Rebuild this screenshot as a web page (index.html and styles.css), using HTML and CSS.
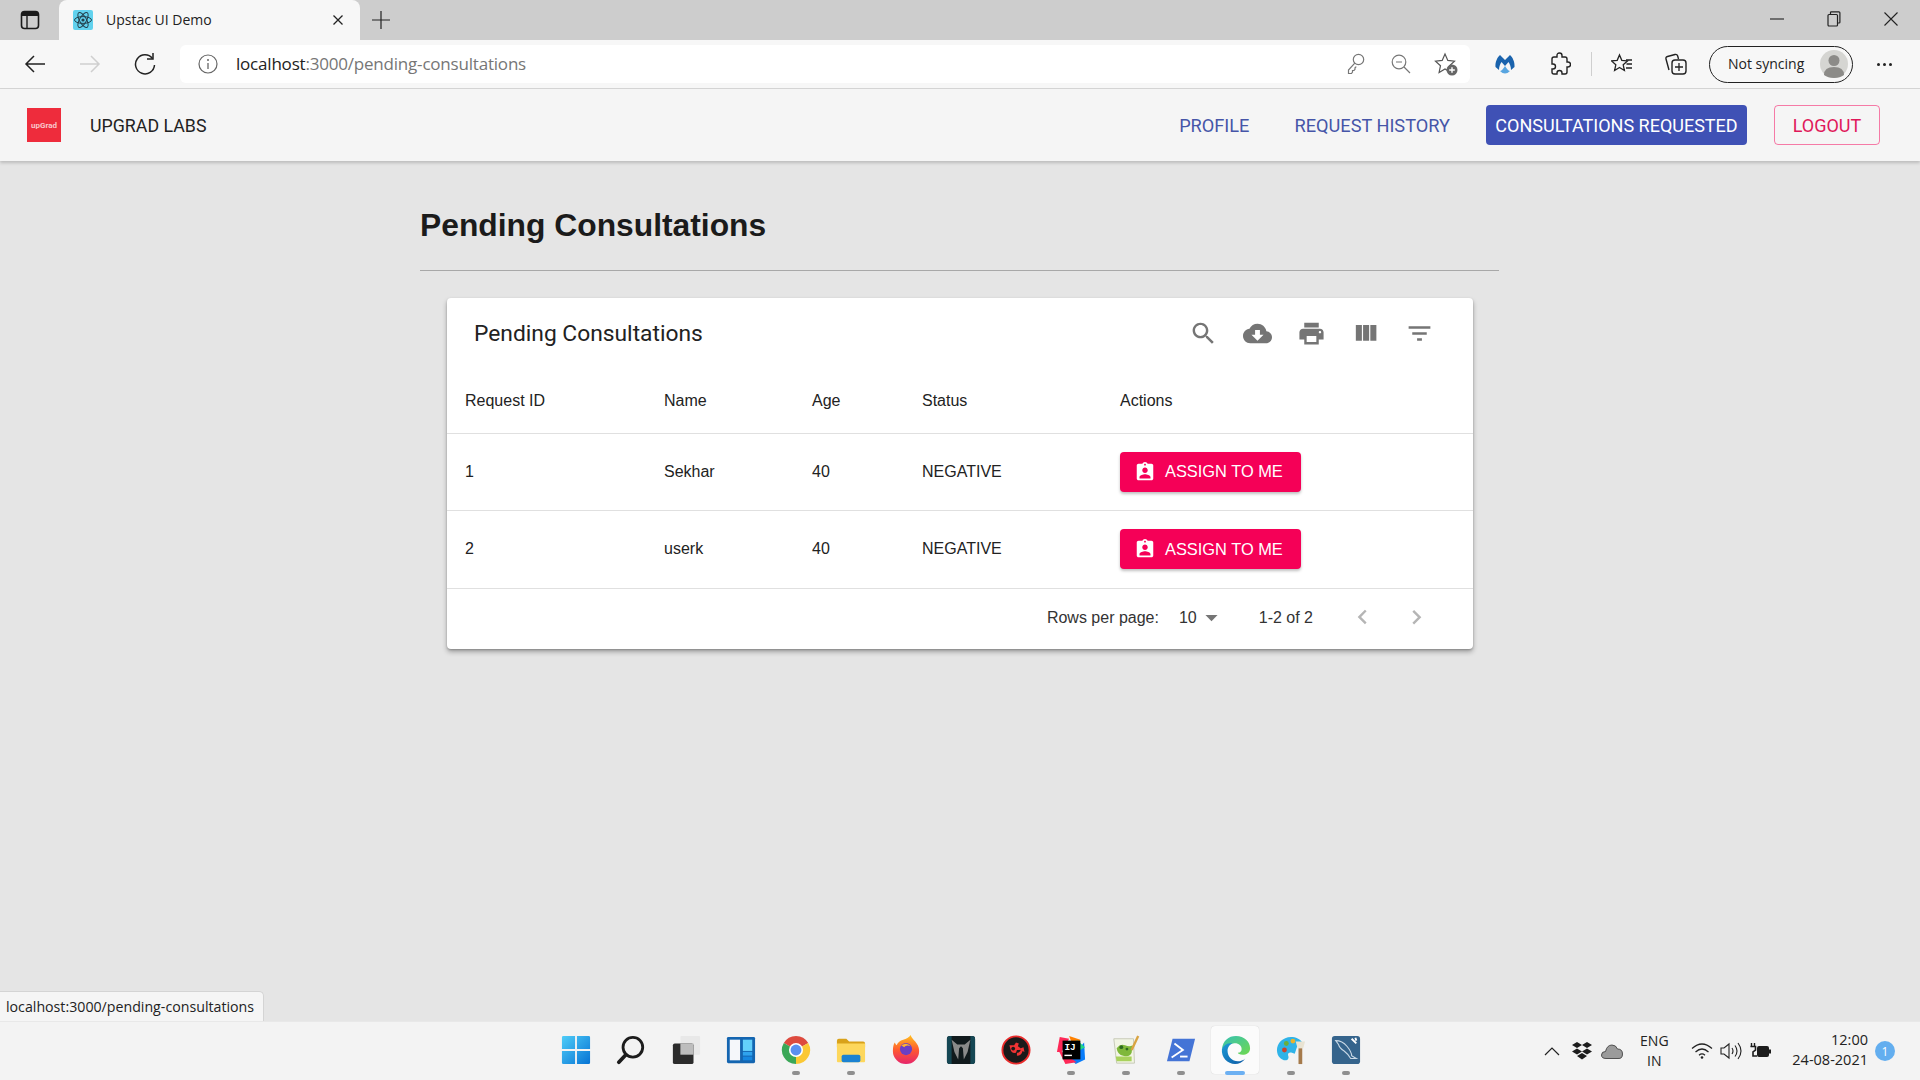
FILE: index.html
```html
<!DOCTYPE html>
<html lang="en">
<head>
    <meta charset="UTF-8">
    <title>Upstac UI Demo</title>
    <link rel="stylesheet" href="styles.css">
</head>
<body>
    <!-- browser tabs -->
    <div class="tabstrip">
        <div class="tab-side">
            <svg width="20" height="20" viewBox="0 0 20 20"><rect x="1.5" y="1.5" width="17" height="17" rx="3" fill="none" stroke="#1a1a1a" stroke-width="1.6"/><path d="M2 2h16v4H2z" fill="#1a1a1a"/><path d="M7 6v12" stroke="#1a1a1a" stroke-width="1.4"/></svg>
        </div>
        <div class="tab">
            <svg class="tab-icon" width="20" height="20" viewBox="0 0 20 20"><rect width="20" height="20" rx="2" fill="#61d2ee"/><g fill="none" stroke="#23404c" stroke-width="1"><ellipse cx="10" cy="10" rx="8.5" ry="3.4"/><ellipse cx="10" cy="10" rx="8.5" ry="3.4" transform="rotate(60 10 10)"/><ellipse cx="10" cy="10" rx="8.5" ry="3.4" transform="rotate(120 10 10)"/></g><circle cx="10" cy="10" r="1.6" fill="#23404c"/></svg>
            <span class="tab-title">Upstac UI Demo</span>
            <svg width="12" height="12" viewBox="0 0 12 12"><path d="M1.5 1.5l9 9M10.5 1.5l-9 9" stroke="#222" stroke-width="1.3"/></svg>
        </div>
        <div class="tab-new">
            <svg width="18" height="18" viewBox="0 0 18 18"><path d="M9 0v18M0 9h18" stroke="#222" stroke-width="1.2"/></svg>
        </div>
        <div class="win-controls">
            <span class="win-btn"><svg width="14" height="14" viewBox="0 0 14 14"><path d="M0 7h14" stroke="#222" stroke-width="1.1"/></svg></span>
            <span class="win-btn"><svg width="14" height="16" viewBox="0 0 14 16"><rect x="1" y="3.5" width="9.5" height="11.5" rx="1" fill="none" stroke="#222" stroke-width="1.2"/><path d="M3.5 3.5V1.6q0-.8.8-.8h7.600q1 0 1 1v9.400q0 .8-.8.8h-1.600" fill="none" stroke="#222" stroke-width="1.2"/></svg></span>
            <span class="win-btn"><svg width="14" height="14" viewBox="0 0 14 14"><path d="M.5.5l13 13M13.500.5l-13 13" stroke="#222" stroke-width="1.1"/></svg></span>
        </div>
    </div>

    <!-- address bar -->
    <div class="toolbar">
        <span class="tool-btn"><svg width="22" height="20" viewBox="0 0 22 20"><path d="M21 10H2M10 2l-8 8 8 8" fill="none" stroke="#222" stroke-width="1.5"/></svg></span>
        <span class="tool-btn"><svg width="22" height="20" viewBox="0 0 22 20"><path d="M1 10h19M12 2l8 8-8 8" fill="none" stroke="#cfcfcf" stroke-width="1.5"/></svg></span>
        <span class="tool-btn"><svg width="22" height="24" viewBox="0 0 22 24"><path d="M18.500 6.500A9.500 9.500 0 1 0 20.500 13" fill="none" stroke="#222" stroke-width="1.5"/><path d="M19 1v6h-6" fill="none" stroke="#222" stroke-width="1.5"/></svg></span>
        <div class="address">
            <svg class="info-icon" width="20" height="20" viewBox="0 0 20 20"><circle cx="10" cy="10" r="9" fill="none" stroke="#666" stroke-width="1.2"/><path d="M10 9v6" stroke="#666" stroke-width="1.3"/><circle cx="10" cy="6" r="1" fill="#666"/></svg>
            <span class="url"><span class="url-host">localhost</span>:3000/pending-consultations</span>
            <span class="addr-btn"><svg width="18" height="22" viewBox="0 0 18 22"><circle cx="11.500" cy="6.500" r="5.200" fill="none" stroke="#777" stroke-width="1.2"/><path d="M7.800 10.200L1.500 17v3.500h3l1-1.500v-1.500h1.500l1-1.200v-1.500l1.300-1.200" fill="none" stroke="#777" stroke-width="1.2"/></svg></span>
            <span class="addr-btn"><svg width="20" height="20" viewBox="0 0 20 20"><circle cx="8" cy="8" r="6.800" fill="none" stroke="#777" stroke-width="1.2"/><path d="M13 13l6 6M5 8h6" stroke="#777" stroke-width="1.2"/></svg></span>
            <span class="addr-btn"><svg width="24" height="24" viewBox="0 0 24 24"><path d="M11 2l2.800 6.400 6.700.7-5 4.600 1.400 6.800-5.900-3.500-5.900 3.500 1.400-6.800-5-4.600 6.700-.7z" fill="none" stroke="#555" stroke-width="1.2"/><circle cx="18" cy="18" r="5.500" fill="#666"/><path d="M18 15.200v5.600M15.200 18h5.600" stroke="#fff" stroke-width="1.4"/></svg></span>
        </div>
        <span class="tool-btn tool-first"><svg width="20" height="20" viewBox="0 0 20 20"><path d="M5 1L10 6l5-5c2.500 2 5 7 4.500 12l-3.500 3c0-3-1-6-2.500-8L10 12 6.500 8C5 10 4 13 4 16l-3.500-3C0 8 2.500 3 5 1z" fill="#1a63ad"/><path d="M5 17q5 5 10 0-2 0-5-5-3 5-5 5z" fill="#58a5e0"/></svg></span>
        <span class="tool-btn"><svg width="22" height="24" viewBox="0 0 22 24"><path d="M8 5V3.500Q8 1 10.500 1T13 3.500V5h3q2 0 2 2v3h1q2.500 0 2.500 2.500T19 15h-1v5q0 2-2 2h-3v-1q0-2.500-2.500-2.500T8 21v1H5q-2 0-2-2v-3h1q2.500 0 2.500-2.500T4 12H3V7q0-2 2-2z" fill="none" stroke="#222" stroke-width="1.4"/></svg></span>
        <span class="tool-sep"></span>
        <span class="tool-btn"><svg width="22" height="22" viewBox="0 0 22 22"><path d="M8.500 2l2.300 5.300 5.700.6-4.300 3.900 1.200 5.700-4.900-3-4.900 3 1.200-5.700L.5 7.900l5.700-.6z" fill="none" stroke="#222" stroke-width="1.3"/><path d="M15 7h6M15.500 11h5.500M15 15h6" stroke="#222" stroke-width="1.3"/></svg></span>
        <span class="tool-btn tool-coll"><svg width="24" height="24" viewBox="0 0 24 24"><rect x="8" y="8" width="14" height="14" rx="3" fill="none" stroke="#222" stroke-width="1.4"/><path d="M15 11v8M11 15h8" stroke="#222" stroke-width="1.3"/><path d="M5 18L2 7q-.5-2 1.500-2.500L11 2.500q2-.5 2.700 1.500l.8 3" fill="none" stroke="#222" stroke-width="1.4"/></svg></span>
        <div class="sync-pill">
            <span>Not syncing</span>
            <svg width="28" height="28" viewBox="0 0 28 28"><circle cx="14" cy="14" r="14" fill="#d5d5d2"/><circle cx="14" cy="10.500" r="5.500" fill="#8c8b88"/><path d="M4 25q0-8 10-8t10 8q-4 3-10 3t-10-3z" fill="#8c8b88"/></svg>
        </div>
        <span class="tool-more"><i></i><i></i><i></i></span>
    </div>

    <!-- app -->
    <header class="appbar">
        <div class="brand-logo">upGrad</div>
        <div class="brand-name">UPGRAD LABS</div>
        <nav class="nav">
            <a class="nav-link nav-profile">PROFILE</a>
            <a class="nav-link nav-history">REQUEST HISTORY</a>
            <a class="nav-active">CONSULTATIONS REQUESTED</a>
            <a class="nav-logout">LOGOUT</a>
        </nav>
    </header>

    <main class="page">
        <h1 class="page-title">Pending Consultations</h1>
        <hr class="page-rule">
        <section class="card">
            <div class="card-head">
                <h2 class="card-title">Pending Consultations</h2>
                <div class="card-tools">
                    <span class="card-tool"><svg viewBox="0 0 24 24"><path d="M15.5 14h-.79l-.28-.27C15.41 12.59 16 11.11 16 9.5 16 5.91 13.09 3 9.5 3S3 5.91 3 9.5 5.91 16 9.5 16c1.61 0 3.09-.59 4.23-1.57l.27.28v.79l5 4.99L20.49 19l-4.99-5zm-6 0C7.01 14 5 11.99 5 9.5S7.01 5 9.5 5 14 7.01 14 9.5 11.99 14 9.5 14z"/></svg></span>
                    <span class="card-tool"><svg viewBox="0 0 24 24"><path d="M19.35 10.04C18.67 6.59 15.64 4 12 4 9.11 4 6.6 5.64 5.35 8.04 2.34 8.36 0 10.91 0 14c0 3.31 2.69 6 6 6h13c2.76 0 5-2.24 5-5 0-2.64-2.05-4.78-4.65-4.96zM17 13l-5 5-5-5h3V9h4v4h3z"/></svg></span>
                    <span class="card-tool"><svg viewBox="0 0 24 24"><path d="M19 8H5c-1.66 0-3 1.34-3 3v6h4v4h12v-4h4v-6c0-1.66-1.34-3-3-3zm-3 11H8v-5h8v5zm3-7c-.55 0-1-.45-1-1s.45-1 1-1 1 .45 1 1-.45 1-1 1zm-1-9H6v4h12V3z"/></svg></span>
                    <span class="card-tool"><svg viewBox="0 0 24 24"><path d="M10 18h5V5h-5v13zm-6 0h5V5H4v13zM16 5v13h5V5h-5z"/></svg></span>
                    <span class="card-tool"><svg viewBox="0 0 24 24"><path d="M10 18h4v-2h-4v2zM3 6v2h18V6H3zm3 7h12v-2H6v2z"/></svg></span>
                </div>
            </div>
            <table class="data-table">
                <colgroup>
                    <col class="col-id"><col class="col-name"><col class="col-age"><col class="col-status"><col>
                </colgroup>
                <thead>
                    <tr><th>Request ID</th><th>Name</th><th>Age</th><th>Status</th><th>Actions</th></tr>
                </thead>
                <tbody>
                    <tr>
                        <td>1</td><td>Sekhar</td><td>40</td><td>NEGATIVE</td>
                        <td><button class="assign-btn"><svg viewBox="0 0 24 24"><path d="M19 3h-4.18C14.4 1.84 13.3 1 12 1c-1.3 0-2.4.84-2.82 2H5c-1.1 0-2 .9-2 2v14c0 1.1.9 2 2 2h14c1.1 0 2-.9 2-2V5c0-1.1-.9-2-2-2zm-7 0c.55 0 1 .45 1 1s-.45 1-1 1-1-.45-1-1 .45-1 1-1zm0 4c1.66 0 3 1.34 3 3s-1.34 3-3 3-3-1.34-3-3 1.34-3 3-3zm6 12H6v-1.4c0-2 4-3.1 6-3.1s6 1.1 6 3.1V19z"/></svg>ASSIGN TO ME</button></td>
                    </tr>
                    <tr class="row-last">
                        <td>2</td><td>userk</td><td>40</td><td>NEGATIVE</td>
                        <td><button class="assign-btn"><svg viewBox="0 0 24 24"><path d="M19 3h-4.18C14.4 1.84 13.3 1 12 1c-1.3 0-2.4.84-2.82 2H5c-1.1 0-2 .9-2 2v14c0 1.1.9 2 2 2h14c1.1 0 2-.9 2-2V5c0-1.1-.9-2-2-2zm-7 0c.55 0 1 .45 1 1s-.45 1-1 1-1-.45-1-1 .45-1 1-1zm0 4c1.66 0 3 1.34 3 3s-1.34 3-3 3-3-1.34-3-3 1.34-3 3-3zm6 12H6v-1.4c0-2 4-3.1 6-3.1s6 1.1 6 3.1V19z"/></svg>ASSIGN TO ME</button></td>
                    </tr>
                </tbody>
            </table>
            <div class="pager">
                <span class="pager-label">Rows per page:</span>
                <span class="pager-size">10</span>
                <svg class="pager-caret" viewBox="0 0 24 24"><path d="M7 10l5 5 5-5z"/></svg>
                <span class="pager-range">1-2 of 2</span>
                <svg class="pager-arrow" viewBox="0 0 24 24"><path d="M15.41 16.09l-4.58-4.59 4.58-4.59L14 5.5l-6 6 6 6z"/></svg>
                <svg class="pager-arrow" viewBox="0 0 24 24"><path d="M8.59 16.34l4.58-4.59-4.58-4.59L10 5.75l6 6-6 6z"/></svg>
            </div>
        </section>
        <div class="status-bubble">localhost:3000/pending-consultations</div>
    </main>

    <!-- windows taskbar -->
    <footer class="taskbar">
        <div></div>
        <div class="task-icons">
            <span class="task-item"><svg viewBox="0 0 32 32"><defs><linearGradient id="winblue" x1="0" y1="0" x2="1" y2="1"><stop offset="0" stop-color="#4fcdf8"/><stop offset="1" stop-color="#0673d4"/></linearGradient></defs><path d="M1 2.500Q1 1 2.500 1H15v14H1zM17 1h12.500Q31 1 31 2.500V15H17zM1 17h14v14H2.500Q1 31 1 29.500zM17 17h14v12.500q0 1.500-1.500 1.500H17z" fill="url(#winblue)"/></svg></span>
            <span class="task-item"><svg viewBox="0 0 32 32"><circle cx="18" cy="13" r="10.500" fill="none" stroke="#1c1c1c" stroke-width="3"/><path d="M10.500 21L3 29" stroke="#1c1c1c" stroke-width="4" stroke-linecap="round"/></svg></span>
            <span class="task-item"><svg viewBox="0 0 32 32"><rect x="10" y="1" width="21" height="20" rx="1" fill="#e8e8e8"/><rect x="2" y="9" width="22" height="22" rx="2" fill="#2b2b2b"/><rect x="10" y="9" width="14" height="12" fill="#bdbdbd"/></svg></span>
            <span class="task-item"><svg viewBox="0 0 32 32"><rect x="1" y="2" width="30" height="28" rx="1.500" fill="#1465b0"/><rect x="4" y="5" width="11" height="22" fill="#f5f7fa"/><rect x="18" y="5" width="10" height="12" fill="#63d0fb"/><rect x="18" y="18" width="10" height="4" fill="#2fa3ee"/><rect x="18" y="23" width="10" height="4" fill="#1687e0"/></svg></span>
            <span class="task-item has-dot"><svg viewBox="0 0 32 32"><path d="M16 16L3 8.500A15 15 0 0 1 29 8.500z" fill="#dd4a3e"/><path d="M16 16L29 8.500A15 15 0 0 1 16 31z" fill="#fbc834"/><path d="M16 16L16 31A15 15 0 0 1 3 8.500z" fill="#3aa757"/><circle cx="16" cy="16" r="7.500" fill="#fff"/><circle cx="16" cy="16" r="5.800" fill="#5a8ff0"/></svg></span>
            <span class="task-item has-dot"><svg viewBox="0 0 32 32"><path d="M1 6q0-2 2-2h8l3 3h15q2 0 2 2v4H1z" fill="#d9a21a"/><path d="M1 9h30v19q0 1-1 1H2q-1 0-1-1z" fill="#fdd75c"/><rect x="6" y="21" width="20" height="8" rx="2" fill="#1b82d2"/></svg></span>
            <span class="task-item"><svg viewBox="0 0 32 32"><defs><linearGradient id="foxfire" x1="0" y1="0" x2="0" y2="1"><stop offset="0" stop-color="#ffc11f"/><stop offset=".5" stop-color="#ff5b2e"/><stop offset="1" stop-color="#e6246c"/></linearGradient></defs><path d="M21 0c1 5 9 8 9 17A14 14 0 0 1 2 17q0-6 2-9 1 2 2 3 2-5 7-6 5-1 8-5z" fill="url(#foxfire)"/><circle cx="16" cy="15" r="6.500" fill="#6b3fc4"/><path d="M11 11q6-4 10 1-5-2-7 1z" fill="#ffb42b"/></svg></span>
            <span class="task-item"><svg viewBox="0 0 32 32"><rect x="1" y="1" width="30" height="30" rx="3" fill="#111a1d"/><path d="M1 4q0-3 3-3h2v30H4q-3 0-3-3zM26 1h2q3 0 3 3v24q0 3-3 3h-2z" fill="#154754"/><path d="M6 5l6 5h8l6-5-3 13-4 8-1-12-2-2-2 2-1 12-4-8z" fill="#8a8a8a"/></svg></span>
            <span class="task-item"><svg viewBox="0 0 32 32"><circle cx="16" cy="16" r="14.500" fill="#1a1a1a" stroke="#ea2b2b" stroke-width="2"/><path d="M9 11h5l2-3 3 1-1 3 3 2-1 2h-3l-1 3q-5 1-6-4z" fill="#f03434"/><path d="M17 22q5 0 6-5l2 1-1-5-5 2 2 1q-1 3-4 3z" fill="#f03434"/><circle cx="13" cy="14.500" r="2" fill="#1a1a1a"/></svg></span>
            <span class="task-item has-dot"><svg viewBox="0 0 32 32"><path d="M4 2l10 2-8 14-5 0z" fill="#fe2857"/><path d="M14 1l12 4-6 12z" fill="#ff8100"/><path d="M30 8l1 18-10 5-6-6z" fill="#087cfa"/><path d="M2 15l8 16 12-2z" fill="#fe2857"/><path d="M22 5l9 8-7 4z" fill="#21d789"/><rect x="7" y="6" width="19" height="20" fill="#000"/><text x="9" y="16" class="ij-text">IJ</text><rect x="9" y="21" width="8" height="1.500" fill="#fff"/></svg></span>
            <span class="task-item has-dot"><svg viewBox="0 0 32 32"><path d="M3 4h21l1 26H6z" fill="#f2f5e4" stroke="#c4c8b5"/><path d="M6 14q4-5 9-3t8 0l-1 8q-2 5-9 3-6-1-7-8z" fill="#7fb83a"/><circle cx="11" cy="13" r="2" fill="#2e6b1e"/><circle cx="17" cy="15" r="1.500" fill="#2e6b1e"/><path d="M5 23h17v5H6z" fill="#a9d25c"/><path d="M29 1l-7 15" stroke="#d9a441" stroke-width="2.500"/></svg></span>
            <span class="task-item has-dot"><svg viewBox="0 0 32 32"><path d="M7 4h24l-6 24H1z" fill="#4474d6"/><path d="M9 9l9 7-12 8" fill="none" stroke="#fff" stroke-width="2"/><path d="M15 23h8" stroke="#fff" stroke-width="2"/></svg></span>
            <span class="task-item task-active"><svg viewBox="0 0 32 32"><defs><linearGradient id="edgegreen" x1="0" y1="0" x2="1" y2="1"><stop offset="0" stop-color="#35c1b4"/><stop offset="1" stop-color="#6fd84e"/></linearGradient><linearGradient id="edgeblue" x1="0" y1="0" x2="1" y2="1"><stop offset="0" stop-color="#1e9cd7"/><stop offset="1" stop-color="#0c59a4"/></linearGradient></defs><path d="M1 15C2 6 8 1 16 1c9 0 15 6 15 13 0 5-4 7-8 7-3 0-5-1-5-2 3 0 4-2 4-4 0-4-4-7-9-6-6 1-10 3-12 6z" fill="url(#edgegreen)"/><path d="M1 15c2-5 7-7 11-6-4 2-5 5-5 8 0 6 5 11 11 11 3 0 6-1 8-3-3 4-7 6-11 6C7 31 0 24 1 15z" fill="url(#edgeblue)"/></svg><i class="task-bar"></i></span>
            <span class="task-item has-dot"><svg viewBox="0 0 32 32"><path d="M16 2C7 2 1 9 1 16c0 7 5 11 9 11 3 0 4-3 3-5-1-3 2-4 4-3l3 1 3-9 5-3C26 4 21 2 16 2z" fill="#2fb3e8"/><circle cx="9" cy="16" r="2.600" fill="#c9442f"/><circle cx="11" cy="9" r="2.600" fill="#6cae3c"/><circle cx="18" cy="6.500" r="2.600" fill="#e8b32b"/><path d="M24 14h4v17h-4z" fill="#a57a4b"/><path d="M21 7h10l-2 7h-6z" fill="#e9e3d2"/></svg></span>
            <span class="task-item has-dot"><svg viewBox="0 0 32 32"><rect x="1" y="1" width="30" height="30" rx="3" fill="#35648c"/><path d="M5 6q7 0 12 6t5 10l5 3-6 0q-3-5-7-8-5-3-6-7z" fill="none" stroke="#c9d9e6" stroke-width="1.200"/><path d="M22 4l5 5M26 3l1 3" stroke="#fff" stroke-width="2"/></svg></span>
        </div>
        <div class="tray">
            <svg class="tray-caret" width="16" height="10" viewBox="0 0 16 10"><path d="M1 9l7-7 7 7" fill="none" stroke="#222" stroke-width="1.2"/></svg>
            <svg class="tray-icon" width="20" height="18" viewBox="0 0 20 18"><path d="M5 0l5 3-5 3-5-3zM15 0l5 3-5 3-5-3zM5 6.500l5 3-5 3-5-3zM15 6.500l5 3-5 3-5-3zM10 11l5 3-5 3.500L5 14z" fill="#1c1c1c"/></svg>
            <svg class="tray-icon" width="22" height="15" viewBox="0 0 22 15"><path d="M5 14.500q-4.500 0-4.500-3.500t4-3.500Q6 1 11 1q4 0 5.500 4 5 0 5 5t-4.500 4.500z" fill="#9b9b9b" stroke="#333" stroke-width=".8"/></svg>
            <div class="tray-lang">ENG<br>IN</div>
            <svg class="tray-icon tray-wifi" width="22" height="16" viewBox="0 0 22 16"><path d="M1 5.500q10-9 20 0M4.500 9q6.500-6 13 0M8 12.200q3-2.500 6 0" fill="none" stroke="#222" stroke-width="1.200"/><circle cx="11" cy="14.500" r="1.300" fill="#222"/></svg>
            <svg class="tray-icon tray-sound" width="22" height="18" viewBox="0 0 22 18"><path d="M1 6h3l5-4v14l-5-4H1z" fill="none" stroke="#222" stroke-width="1.100"/><path d="M12 6q2 3 0 6M15 3.500q4 5.500 0 11M18 1q6 8 0 16" fill="none" stroke="#222" stroke-width="1.100"/></svg>
            <svg class="tray-power" width="22" height="16" viewBox="0 0 22 16"><rect x="7" y="3" width="12" height="11" rx="2" fill="#1c1c1c"/><rect x="19" y="6.500" width="2" height="4" fill="#1c1c1c"/><path d="M1.500 0v4M4.500 0v4" stroke="#1c1c1c" stroke-width="1.400"/><path d="M.5 3.500h5V7L3 9v4h4" fill="none" stroke="#1c1c1c" stroke-width="1.600"/></svg>
            <div class="tray-clock">12:00<br>24-08-2021</div>
            <span class="tray-badge">1</span>
        </div>
    </footer>
</body>
</html>
```
FILE: styles.css
```css
* {
    box-sizing: border-box;
}
html, body {
    margin: 0;
    height: 100%;
}
body {
    width: 1920px;
    height: 1080px;
    display: flex;
    flex-direction: column;
    overflow: hidden;
    background: #e5e5e5;
    font-family: "Liberation Sans", Arial, sans-serif;
}

/* browser tabs */
.tabstrip {
    height: 40px;
    flex: none;
    display: flex;
    background: #cdcdcd;
}
.tab-side {
    width: 59px;
    display: flex;
    align-items: center;
    justify-content: center;
}
.tab {
    width: 301px;
    display: flex;
    align-items: center;
    padding: 0 16px 0 14px;
    background: #f7f7f7;
    border-radius: 8px 8px 0 0;
}
.tab-icon {
    margin-right: 13px;
}
.tab-title {
    flex: 1;
    padding-bottom: 2px;
    font-family: "Open Sans", sans-serif;
    font-size: 14px;
    color: #222;
}
.tab-new {
    width: 42px;
    display: flex;
    align-items: center;
    justify-content: center;
}
.win-controls {
    margin-left: auto;
    display: flex;
    padding-right: 1px;
}
.win-btn {
    width: 57px;
    display: flex;
    align-items: center;
    justify-content: center;
    padding-bottom: 2px;
}

/* address bar */
.toolbar {
    height: 49px;
    flex: none;
    display: flex;
    align-items: center;
    padding-left: 7px;
    background: #f7f7f7;
    border-bottom: 1px solid #d6d6d6;
}
.tool-btn {
    width: 55px;
    height: 38px;
    flex: none;
    display: flex;
    align-items: center;
    justify-content: center;
}
.tool-first {
    margin-left: 7px;
}
.tool-coll {
    margin-left: -1px;
}
.tool-sep {
    width: 1px;
    height: 24px;
    margin: 0 2px 0 4px;
    background: #cfcfcf;
    flex: none;
}
.address {
    width: 1290px;
    height: 38px;
    margin-left: 8px;
    flex: none;
    display: flex;
    align-items: center;
    padding: 0 2px 0 18px;
    background: #fff;
    border-radius: 6px;
}
.info-icon {
    margin-right: 18px;
}
.url {
    flex: 1;
    padding-bottom: 2px;
    font-family: "Open Sans", sans-serif;
    font-size: 17px;
    color: #767676;
    letter-spacing: -.2px;
}
.url-host {
    color: #222;
}
.addr-btn {
    width: 45px;
    display: flex;
    justify-content: center;
}
.sync-pill {
    width: 144px;
    height: 37px;
    margin-left: 6px;
    flex: none;
    display: flex;
    align-items: center;
    justify-content: space-between;
    padding: 0 4px 2px 18px;
    border: 1.5px solid #222;
    border-radius: 19px;
    font-family: "Open Sans", sans-serif;
    font-size: 14px;
    color: #222;
}
.sync-pill svg {
    margin-top: 2px;
}
.tool-more {
    flex: 1;
    display: flex;
    justify-content: center;
    gap: 3px;
    padding-right: 5px;
}
.tool-more i {
    width: 3px;
    height: 3px;
    border-radius: 50%;
    background: #222;
}

/* app bar */
.appbar {
    height: 72px;
    flex: none;
    display: flex;
    align-items: center;
    padding: 0 40px 0 27px;
    background: #f5f5f5;
    box-shadow: 0 2px 3px rgba(0,0,0,0.18);
    position: relative;
    font-family: Roboto, sans-serif;
    font-size: 18px;
}
.brand-logo {
    width: 34px;
    height: 34px;
    display: flex;
    align-items: center;
    justify-content: center;
    background: #ee2c3c;
    color: #f9c7cb;
    font-size: 8px;
    font-weight: 700;
}
.brand-name {
    margin-left: 29px;
    font-size: 17.8px;
    color: #222;
}
.nav {
    margin-left: auto;
    display: flex;
    align-items: center;
}
.nav-link {
    font-size: 18.2px;
    color: #4655a8;
}
.nav-profile {
    margin-right: 45px;
}
.nav-history {
    margin-right: 36px;
}
.nav-active {
    width: 261px;
    height: 40px;
    display: flex;
    align-items: center;
    justify-content: center;
    margin-right: 27px;
    background: #3f51b5;
    color: #fff;
    border-radius: 4px;
}
.nav-logout {
    width: 106px;
    height: 40px;
    display: flex;
    align-items: center;
    justify-content: center;
    color: #e0185a;
    border: 1px solid rgba(245,0,87,0.5);
    border-radius: 4px;
}

/* page */
.page {
    flex: 1;
    position: relative;
    padding: 0 421px 0 420px;
}
.page-title {
    margin: 0;
    padding-top: 44px;
    font-size: 31.8px;
    line-height: 40px;
    font-weight: 700;
    color: #1b1b1b;
}
.page-rule {
    margin: 25px 0 0;
    border: 0;
    border-top: 1px solid #a8a8a8;
}
.card {
    margin: 27px 26px 0 27px;
    background: #fff;
    border-radius: 4px;
    box-shadow: 0 3px 5px rgba(0,0,0,0.3), 0 1px 2px rgba(0,0,0,0.2);
}
.card-head {
    height: 71px;
    display: flex;
    align-items: center;
    padding: 0 27px 0 27px;
}
.card-title {
    margin: 0;
    font-family: Roboto, sans-serif;
    font-size: 22.8px;
    font-weight: 400;
    color: #222;
}
.card-tools {
    margin-left: auto;
    display: flex;
}
.card-tool {
    width: 54px;
    display: flex;
    justify-content: center;
}
.card-tool svg {
    width: 29px;
    height: 29px;
    fill: #757575;
}
.data-table {
    width: 100%;
    border-collapse: collapse;
    font-size: 16px;
    color: #222;
}
.col-id { width: 199px; }
.col-name { width: 148px; }
.col-age { width: 110px; }
.col-status { width: 198px; }
.data-table th {
    height: 64px;
    padding: 1px 0 0 18px;
    text-align: left;
    font-weight: 400;
    border-bottom: 1px solid #e0e0e0;
}
.data-table td {
    height: 77px;
    padding: 0 0 0 18px;
    border-bottom: 1px solid #e0e0e0;
}
.data-table .row-last td {
    height: 78px;
}
.assign-btn {
    width: 181px;
    height: 40px;
    display: flex;
    align-items: center;
    padding: 0 0 0 14px;
    border: 0;
    border-radius: 4px;
    background: #f50057;
    color: #fff;
    font-family: "Liberation Sans", Arial, sans-serif;
    font-size: 16.4px;
    box-shadow: 0 2px 3px rgba(0,0,0,0.25);
}
.assign-btn svg {
    width: 22px;
    height: 22px;
    margin-right: 9px;
    fill: #fff;
}
.pager {
    height: 60px;
    display: flex;
    align-items: center;
    justify-content: flex-end;
    padding-right: 30px;
    padding-bottom: 2px;
    font-size: 16px;
    color: #333;
}
.pager-label {
    margin-right: 20px;
}
.pager-caret {
    width: 29px;
    height: 29px;
    fill: #757575;
}
.pager-range {
    margin: 0 22px 0 33px;
}
.pager-arrow {
    width: 29px;
    height: 29px;
    fill: #b5b5b5;
    margin-left: 13px;
    margin-right: 12px;
}
.status-bubble {
    position: absolute;
    left: 0;
    bottom: 0;
    width: 264px;
    height: 30px;
    padding: 5px 0 0 6px;
    background: #f5f5f5;
    border: 1px solid #d4d4d4;
    border-left: 0;
    border-bottom: 0;
    border-radius: 0 5px 0 0;
    font-family: "Open Sans", sans-serif;
    font-size: 14.2px;
    color: #222;
}

/* taskbar */
.taskbar {
    height: 59px;
    flex: none;
    display: grid;
    grid-template-columns: 1fr auto 1fr;
    padding-left: 1px;
    background: #f3f3f3;
    border-top: 1px solid #e8e8e8;
}
.task-icons {
    display: flex;
}
.task-item {
    width: 55px;
    position: relative;
    display: flex;
    align-items: center;
    justify-content: center;
    padding-bottom: 2px;
}
.task-item svg {
    width: 30px;
    height: 30px;
}
.ij-text {
    font-family: "Liberation Mono", monospace;
    font-size: 10px;
    font-weight: 700;
    fill: #fff;
}
.has-dot::after {
    content: "";
    position: absolute;
    left: 24px;
    bottom: 5px;
    width: 8px;
    height: 4px;
    border-radius: 2px;
    background: #8f8f8f;
}
.task-active::before {
    content: "";
    position: absolute;
    left: 3px;
    top: 4px;
    width: 48px;
    height: 48px;
    background: #fbfbfb;
    border-radius: 4px;
    box-shadow: 0 0 1px rgba(0,0,0,0.2);
}
.task-active svg {
    position: relative;
}
.task-bar {
    position: absolute;
    left: 17px;
    bottom: 5px;
    width: 20px;
    height: 4px;
    border-radius: 2px;
    background: #6cb0f2;
}
.tray {
    display: flex;
    align-items: center;
    justify-content: flex-end;
    padding-right: 25px;
    font-family: "Open Sans", sans-serif;
    font-size: 14px;
    color: #222;
}
.tray-caret {
    margin-right: 12px;
}
.tray-icon {
    margin-right: 9px;
}
.tray-wifi {
    margin-right: 7px;
}
.tray-sound {
    margin-right: 8px;
}
.tray-lang {
    width: 44px;
    margin: 0 15px 0 0;
    text-align: center;
    line-height: 20px;
}
.tray-clock {
    margin-left: 20px;
    padding-bottom: 2px;
    font-size: 14.5px;
    text-align: right;
    line-height: 20px;
}
.tray-badge {
    width: 20px;
    height: 20px;
    margin-left: 7px;
    display: flex;
    align-items: center;
    justify-content: center;
    border-radius: 50%;
    background: #63aeef;
    color: #fff;
    font-size: 12px;
}
```
